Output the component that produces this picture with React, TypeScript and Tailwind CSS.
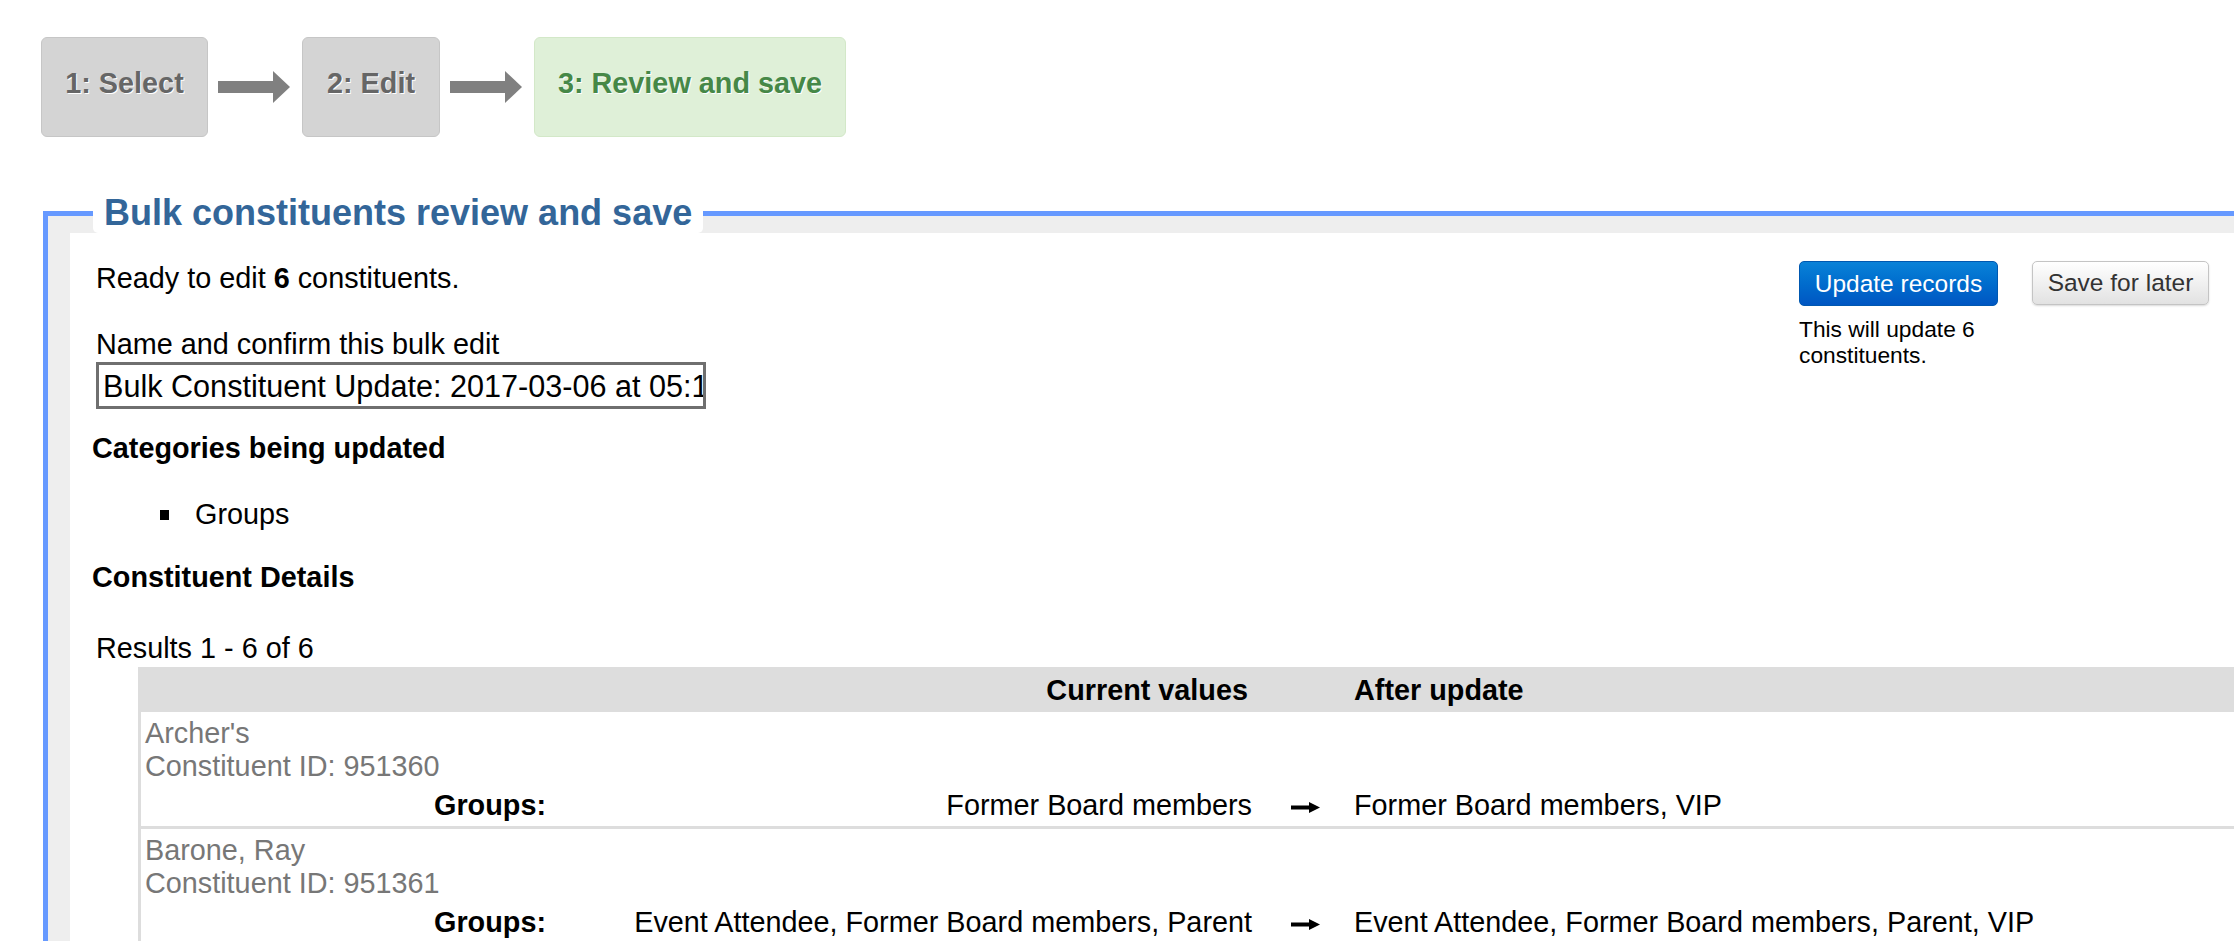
import React from "react";

// Bulk edit wizard, step 3 of 3.
const STEPS = [
  { label: "1: Select", width: "w-[167px]", active: false },
  { label: "2: Edit", width: "w-[138px]", active: false },
  { label: "3: Review and save", width: "w-[312px]", active: true },
];

const ROWS = [
  {
    name: "Archer's",
    id: "951360",
    current: "Former Board members",
    after: "Former Board members, VIP",
  },
  {
    name: "Barone, Ray",
    id: "951361",
    current: "Event Attendee, Former Board members, Parent",
    after: "Event Attendee, Former Board members, Parent, VIP",
  },
];

function StepArrow() {
  return (
    <svg width="72" height="32" viewBox="0 0 72 32" aria-hidden>
      <rect x="0" y="10" width="57" height="12" fill="#808080" />
      <polygon points="55,0 72,16 55,32" fill="#808080" />
    </svg>
  );
}

function ChangeArrow() {
  return (
    <svg width="29" height="11" viewBox="0 0 29 11" className="inline-block" aria-hidden>
      <rect x="0" y="3.5" width="20" height="4" fill="#000" />
      <polygon points="18,0 29,5.5 18,11" fill="#000" />
    </svg>
  );
}

export default function App() {
  return (
    <div className="min-h-screen overflow-hidden bg-white font-['Liberation_Sans',Arial,sans-serif] text-[28.8px] leading-[32px] text-black">
      <div className="flex items-center pl-[41px] pt-[37px]">
        {STEPS.map((step, i) => (
          <React.Fragment key={step.label}>
            {i > 0 && (
              <div className="ml-[10px] mr-[12px] flex">
                <StepArrow />
              </div>
            )}
            <div
              className={
                step.active
                  ? `${step.width} flex h-[100px] items-center justify-center rounded-[6px] border border-[#d3e8c8] bg-[#dff0d8] pb-[9px] font-bold text-[#468847] [text-shadow:1px_1px_0_#fff]`
                  : `${step.width} flex h-[100px] items-center justify-center rounded-[6px] border border-[#c6c6c6] bg-[#d4d4d4] pb-[9px] font-bold text-[#666666] [text-shadow:1px_1px_0_#fff]`
              }
            >
              {step.label}
            </div>
          </React.Fragment>
        ))}
      </div>

      <fieldset className="ml-[43px] mt-[56px] min-w-0 border-0 border-l-[5px] border-t-[5px] border-solid border-[#6699ff] bg-[#eeeeee] pb-[40px] pl-[22px]">
        <legend className="ml-[23px] rounded-[5px] bg-white px-[11px] text-[36px] font-bold leading-[40px] text-[#336699]">
          Bulk constituents review and save
        </legend>

        <div className="bg-white pl-[22px] pt-[29px] pb-[20px]">
          <div className="flex items-start justify-between pr-[25px]">
            <div className="pl-[4px]">
              <p>
                Ready to edit <b>6</b> constituents.
              </p>
              <p className="mt-[34px]">Name and confirm this bulk edit</p>
              <input
                readOnly
                value="Bulk Constituent Update: 2017-03-06 at 05:15 PM"
                className="mt-[2px] h-[47px] w-[610px] border-[3px] border-[#6f6f6f] bg-white pl-[4px] pr-0 pt-[1px] font-['Liberation_Sans',Arial,sans-serif] text-[30.6px] leading-[32px] text-black outline-none"
              />
            </div>

            <div className="-mt-[1px] flex items-start gap-[34px]">
              <div className="w-[199px]">
                <button className="flex h-[45px] w-[199px] items-center justify-center rounded-[5px] border border-[#0058b0] bg-gradient-to-b from-[#0a82d8] to-[#0056c2] text-[24.5px] text-white">
                  Update records
                </button>
                <p className="mt-[10px] text-[22.75px] leading-[26px]">This will update 6 constituents.</p>
              </div>
              <button className="flex h-[44px] w-[177px] items-center justify-center rounded-[5px] border border-[#c4c4c4] bg-gradient-to-b from-[#ffffff] to-[#e2e2e2] text-[24.5px] text-[#333333] shadow-[0_1px_2px_rgba(0,0,0,0.15)]">
                Save for later
              </button>
            </div>
          </div>

          <h3 className="mt-[23px] font-bold">Categories being updated</h3>
          <ul className="mt-[34px]">
            <li className="flex items-center">
              <span className="ml-[68px] mr-[26px] mt-[2px] h-[10px] w-[9px] bg-black" />
              Groups
            </li>
          </ul>

          <h3 className="mt-[31px] font-bold">Constituent Details</h3>
          <p className="mt-[39px] pl-[4px]">Results 1 - 6 of 6</p>

          <div className="ml-[46px] mt-[3px] border-l-[3px] border-[#dddddd]">
            <div className="grid h-[45px] grid-cols-[409px_702px_102px_1fr] items-center bg-[#dddddd] font-bold">
              <div />
              <div className="pr-[4px] text-right">Current values</div>
              <div />
              <div>After update</div>
            </div>

            {ROWS.map((row) => (
              <div key={row.id} className="border-b-[3px] border-[#dddddd] pb-[4px] pl-[4px] pt-[5px]">
                <div className="leading-[33px] text-[#777777]">{row.name}</div>
                <div className="leading-[33px] text-[#777777]">Constituent ID: {row.id}</div>
                <div className="-ml-[4px] mt-[6px] grid grid-cols-[409px_702px_102px_1fr] leading-[33px]">
                  <div className="pr-[4px] text-right font-bold">Groups:</div>
                  <div className="text-right">{row.current}</div>
                  <div className="pl-[39px]">
                    <ChangeArrow />
                  </div>
                  <div>{row.after}</div>
                </div>
              </div>
            ))}
          </div>
        </div>
      </fieldset>
    </div>
  );
}
